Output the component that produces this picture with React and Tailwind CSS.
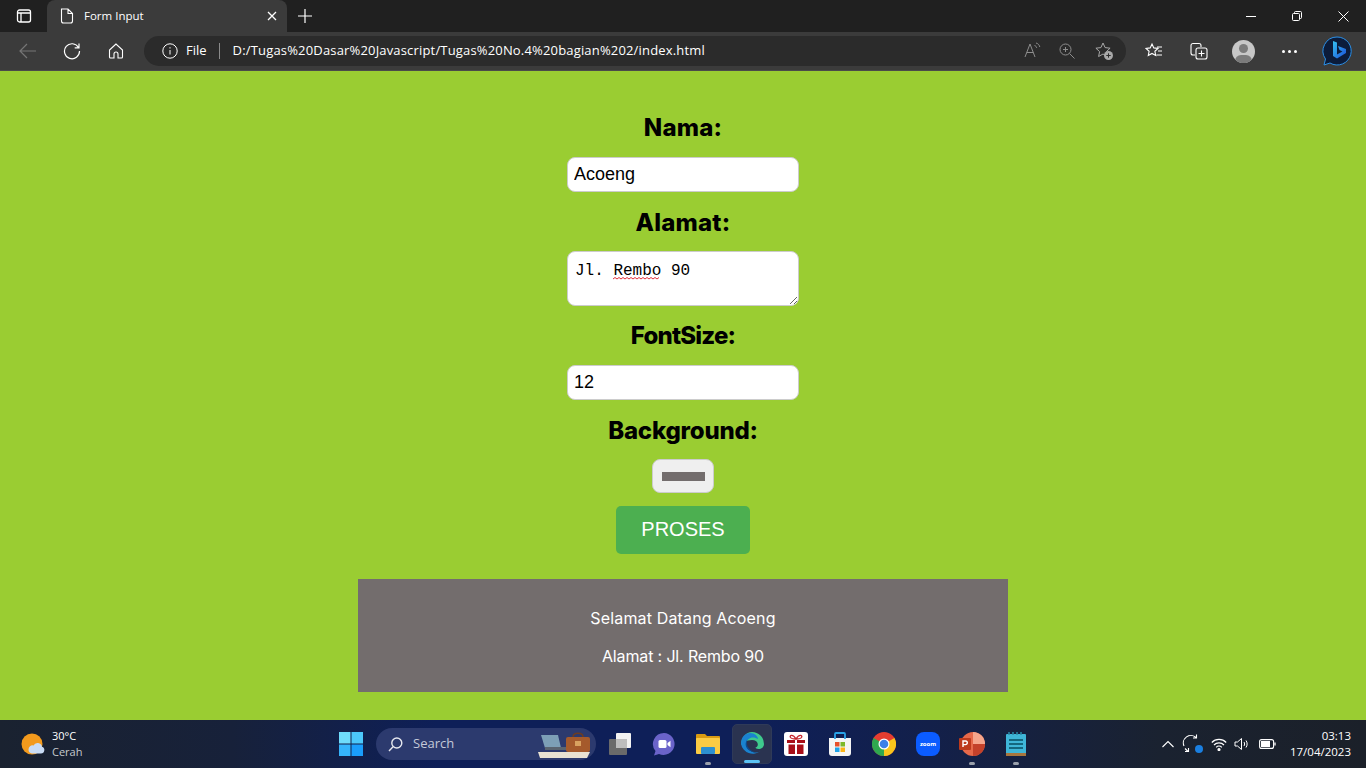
import React from "react";

const ui = { fontFamily: '"Open Sans","Noto Sans",sans-serif' };
const pop = { fontFamily: 'Inter,"Noto Sans",sans-serif' };

function TabBar() {
  return (
    <div className="h-[32px] bg-[#202020] flex items-end text-white">
      <div className="w-[47px] h-full flex items-center justify-center">
        <svg width="16" height="16" viewBox="0 0 16 16" fill="none" stroke="#fff" strokeWidth="1.3"><rect x="1.5" y="2" width="13" height="12" rx="2"/><path d="M1.5 5h13M5 5v9"/></svg>
      </div>
      <div className="w-[240px] h-full bg-[#3b3b3b] rounded-t-[8px] flex items-center pl-[12px] pr-[10px]">
        <svg width="16" height="16" viewBox="0 0 16 16" fill="none" stroke="#fff" strokeWidth="1.1"><path d="M2.500 1h6.500l4.500 4.500V13a2 2 0 0 1-2 2h-7a2 2 0 0 1-2-2zM9 1V5.500h4.500"/></svg>
        <span className="ml-[9px] text-[11.5px] flex-1" style={ui}>Form Input</span>
        <svg width="10" height="10" viewBox="0 0 10 10" stroke="#fff" strokeWidth="1.3"><path d="M1 1l8 8M9 1l-8 8"/></svg>
      </div>
      <div className="w-[36px] h-full flex items-center justify-center">
        <svg width="14" height="14" viewBox="0 0 14 14" stroke="#fff" strokeWidth="1.2"><path d="M7 0v14M0 7h14"/></svg>
      </div>
      <div className="flex-1" />
      <div className="w-[46px] h-full flex items-center justify-center">
        <svg width="10" height="10" viewBox="0 0 10 10" stroke="#fff"><path d="M0 5.5h10"/></svg>
      </div>
      <div className="w-[46px] h-full flex items-center justify-center">
        <svg width="10" height="10" viewBox="0 0 10 10" fill="none" stroke="#fff"><rect x=".5" y="2.5" width="7" height="7" rx="1"/><path d="M2.5 2.5V1.5a1 1 0 0 1 1-1h5a1 1 0 0 1 1 1v5a1 1 0 0 1-1 1h-1"/></svg>
      </div>
      <div className="w-[46px] h-full flex items-center justify-center">
        <svg width="11" height="11" viewBox="0 0 11 11" stroke="#fff"><path d="M.5.5l10 10M10.5.5l-10 10"/></svg>
      </div>
    </div>
  );
}

function Toolbar() {
  return (
    <div className="h-[39px] bg-[#3b3b3b] border-b border-[#4a4a4a] flex items-center text-white">
      <div className="w-[50px] shrink-0 pl-[19px] flex">
        <svg width="18" height="16" viewBox="0 0 18 16" fill="none" stroke="#767676" strokeWidth="1.2"><path d="M17 8H1M8 1L1 8l7 7"/></svg>
      </div>
      <div className="w-[44px] shrink-0 flex justify-center">
        <svg width="18" height="18" viewBox="0 0 18 18" fill="none" stroke="#fff" strokeWidth="1.2"><path d="M15.5 5.5A7.5 7.5 0 1 0 16.5 9M16 1.5v4.3h-4.3"/></svg>
      </div>
      <div className="w-[44px] shrink-0 flex justify-center">
        <svg width="16" height="16" viewBox="0 0 16 16" fill="none" stroke="#fff" strokeWidth="1.1"><path d="M8 1L1.5 7v7a1 1 0 0 0 1 1H6v-4a2 2 0 0 1 4 0v4h3.5a1 1 0 0 0 1-1V7z"/></svg>
      </div>
      <div className="w-[982px] shrink-0 h-[30px] ml-[6px] mt-[-1px] bg-[#2b2b2b] rounded-full flex items-center pl-[18px] pr-[12px]">
        <svg width="16" height="16" viewBox="0 0 16 16" fill="none" stroke="#fff" strokeWidth="1"><circle cx="8" cy="8" r="7.2"/><path d="M8 7v4.5M8 4.2v1.3"/></svg>
        <span className="ml-[8px] text-[13px]" style={ui}>File</span>
        <span className="ml-[12px] w-px h-[16px] bg-[#8a8a8a]" />
        <span className="ml-[13px] text-[13px] flex-1 tracking-[0.17px] whitespace-nowrap" style={ui}>D:/Tugas%20Dasar%20Javascript/Tugas%20No.4%20bagian%202/index.html</span>
        <svg className="mr-[18px]" width="17" height="17" viewBox="0 0 17 17" fill="none" stroke="#8d8d8d" strokeWidth="1"><path d="M1 15L6 2l5 13M2.8 10.5h6.4M10.5 3.5c1.2.3 2 1.200 2.200 2.400M12 1c2 .5 3.400 2 3.800 4"/></svg>
        <svg className="mr-[19px]" width="16" height="16" viewBox="0 0 16 16" fill="none" stroke="#8d8d8d" strokeWidth="1"><circle cx="6.5" cy="6.5" r="5.5"/><path d="M10.5 10.500l5 5M6.500 4v5M4 6.500h5"/></svg>
        <svg width="20" height="20" viewBox="0 0 20 20"><path d="M9 2l2.100 4.600 5 .6-3.700 3.400 1 4.900L9 13l-4.400 2.500 1-4.900L1.900 7.200l5-.6z" fill="none" stroke="#a8a8a8" strokeWidth="1"/><circle cx="14.500" cy="14.500" r="4.500" fill="#a8a8a8"/><path d="M14.500 12.300v4.400M12.300 14.500h4.400" stroke="#2b2b2b" strokeWidth="1"/></svg>
      </div>
      <div className="w-[19px] shrink-0" />
      <svg className="shrink-0" width="18" height="18" viewBox="0 0 18 18" fill="none" stroke="#fff" strokeWidth="1.1"><path d="M7 2l1.800 3.900 4.200.5-3.100 2.900.8 4.200L7 11.400l-3.700 2.100.8-4.200L1 6.400l4.200-.5zM12 5h5M13 9h4M11.500 13H17"/></svg>
      <div className="w-[27px] shrink-0" />
      <svg className="shrink-0" width="18" height="18" viewBox="0 0 18 18" fill="none" stroke="#fff" strokeWidth="1.1"><path d="M5 13H3a2 2 0 0 1-2-2V3.500a2 2 0 0 1 2-2h6a2 2 0 0 1 2 2V5"/><rect x="6" y="6" width="11" height="11" rx="2"/><path d="M11.500 8.500v6M8.500 11.500h6"/></svg>
      <div className="w-[24px] shrink-0" />
      <div className="relative shrink-0 w-[23px] h-[23px] rounded-full bg-[#c7c7c7] overflow-hidden">
        <div className="absolute left-[7px] top-[4px] w-[9px] h-[9px] rounded-full bg-[#7b7b7b]" />
        <div className="absolute left-[3px] top-[15px] w-[17px] h-[12px] rounded-full bg-[#7b7b7b]" />
      </div>
      <div className="w-[27px] shrink-0" />
      <div className="flex gap-[3px] shrink-0">
        <span className="w-[3px] h-[3px] rounded-full bg-white" />
        <span className="w-[3px] h-[3px] rounded-full bg-white" />
        <span className="w-[3px] h-[3px] rounded-full bg-white" />
      </div>
      <div className="w-[24px] shrink-0" />
      <svg className="shrink-0" width="32" height="32" viewBox="0 0 32 32" fill="none">
        <defs><linearGradient id="bing" x1="0" y1="0" x2="1" y2="1"><stop offset="0" stopColor="#35c1f1"/><stop offset="1" stopColor="#1b4fd8"/></linearGradient></defs>
        <path d="M16 2a14 14 0 1 1-7 26l-6 2 1.500-6A14 14 0 0 1 16 2z" fill="#0c1c3a" stroke="#2a8fe8" strokeWidth="1"/>
        <path d="M12 6l4 1.500v12l5.500-3-3-1.500-1.500-4 8 3v4l-9 5.500-4-2.500z" fill="url(#bing)"/>
      </svg>
    </div>
  );
}

function Label({ children, className }) {
  return <div className={"h-[36px] leading-[38px] text-[24px] font-extrabold text-black text-center " + className} style={pop}>{children}</div>;
}

function Form() {
  const inputCls = "block w-[232px] h-[35px] bg-white border border-[#cccccc] rounded-[8px] px-[6px] text-[18px] text-black outline-none";
  const sans = { fontFamily: '"Liberation Sans",Arial,sans-serif' };
  return (
    <div className="h-[649px] bg-[#9acd32] flex flex-col items-center pt-[38px]">
      <Label className="tracking-[0.2px]">Nama:</Label>
      <input className={inputCls + " mt-[12px]"} style={sans} defaultValue="Acoeng" />
      <Label className="mt-[12px] tracking-[0.2px]">Alamat:</Label>
      <div className="relative mt-[11px] w-[232px] h-[55px]">
        <textarea
          className="block w-[232px] h-[55px] bg-white border border-[#cccccc] rounded-[8px] px-[7px] pt-[10px] pb-[4px] text-[16px] leading-[18px] text-black outline-none"
          style={{ fontFamily: '"Liberation Mono",monospace' }}
          spellCheck={false}
          defaultValue="Jl. Rembo 90"
        />
        <svg className="absolute left-[46px] top-[26px]" width="48" height="3" viewBox="0 0 48 3" fill="none" stroke="#e0303a" strokeWidth="1">
          <path d="M0 2l2-1.500 2 1.500 2-1.500 2 1.500 2-1.500 2 1.500 2-1.500 2 1.500 2-1.500 2 1.500 2-1.500 2 1.500 2-1.500 2 1.500 2-1.500 2 1.500 2-1.500 2 1.500 2-1.500 2 1.500 2-1.500 2 1.500 2-1.500"/>
        </svg>
      </div>
      <Label className="mt-[11px] tracking-[-0.8px]">FontSize:</Label>
      <input className={inputCls + " mt-[12px]"} style={sans} defaultValue="12" />
      <Label className="mt-[12px] tracking-[-0.2px]">Background:</Label>
      <div className="mt-[11px] w-[62px] h-[34px] bg-[#efefef] border border-[#cccccc] rounded-[8px] flex items-center justify-center">
        <div className="w-[43px] h-[9px] bg-[#736d6d]" />
      </div>
      <div className="mt-[13px] w-[134px] h-[48px] pb-[2px] bg-[#4caf50] rounded-[5px] text-white text-[20px] flex items-center justify-center" style={sans}>PROSES</div>
      <div className="mt-[25px] w-[650px] h-[113px] pt-[4px] bg-[#736d6d] text-white text-[16px] text-center flex flex-col justify-center gap-[17px]" style={pop}>
        <div className="leading-[21px] tracking-[0.15px]">Selamat Datang Acoeng</div>
        <div className="leading-[21px] tracking-[-0.15px]">Alamat : Jl. Rembo 90</div>
      </div>
    </div>
  );
}

function TaskIcon({ children, active, dot }) {
  return (
    <div className="relative w-[44px] h-[44px] flex items-center justify-center">
      {active && <span className="absolute left-[2px] top-[2px] w-[40px] h-[40px] rounded-[5px] bg-[#2a3350] border border-[#2f3a58]" />}
      <span className="relative flex">{children}</span>
      {active && <span className="absolute bottom-[3px] left-[14px] w-[16px] h-[3px] rounded-full bg-[#5cc3f5]" />}
      {dot && <span className="absolute bottom-[1px] left-[19px] w-[6px] h-[3px] rounded-full bg-[#9aa0ab]" />}
    </div>
  );
}

function Taskbar() {
  return (
    <div className="h-[48px] flex items-center text-white bg-[linear-gradient(90deg,#1a2230_0%,#17213a_17%,#0e1f58_32%,#0e1f58_55%,#13204a_68%,#1a2230_85%,#1b2029_100%)]" style={ui}>
      <div className="w-[338px] pl-[21px] flex items-center">
        <svg width="24" height="24" viewBox="0 0 24 24"><circle cx="11" cy="12" r="10.500" fill="#f39a1d"/><path d="M11 21.500h9a3.500 3.500 0 0 0 1-6.800 4.500 4.500 0 0 0-8.500-1.200A4 4 0 0 0 7.500 17.500a4 4 0 0 0 3.500 4z" fill="#c9dcf5"/></svg>
        <div className="ml-[7px] text-[11px] leading-[16px]">
          <div>30°C</div>
          <div className="text-[#c6c9ce]">Cerah</div>
        </div>
      </div>
      <div className="w-[26px] flex justify-center">
        <svg width="24" height="24" viewBox="0 0 24 24">
          <rect x="0" y="0" width="11.500" height="11.500" fill="#6fdcfb"/><rect x="12.500" y="0" width="11.500" height="11.500" fill="#4cc8fa"/>
          <rect x="0" y="12.500" width="11.500" height="11.500" fill="#35b4fb"/><rect x="12.500" y="12.500" width="11.500" height="11.500" fill="#1a9dfb"/>
        </svg>
      </div>
      <div className="ml-[12px] relative w-[220px] h-[32px] rounded-full bg-[#2c3a6e] flex items-center pl-[12px]">
        <svg width="15" height="15" viewBox="0 0 15 15" fill="none" stroke="#e6e8ef" strokeWidth="1.400"><circle cx="8.800" cy="6" r="5"/><path d="M5 9.800L1 14"/></svg>
        <span className="ml-[10px] text-[13px] text-[#c4c9d8]">Search</span>
        <svg className="absolute left-[162px] top-[4px]" width="54" height="26" viewBox="0 0 54 26">
          <path d="M3 3h17l3 13H7z" fill="#7d9fb6"/><path d="M7 15h24v3H7z" fill="#5a6470"/>
          <rect x="28" y="5" width="24" height="15" rx="2" fill="#a55a2c"/><path d="M35 5c0-5 10-5 10 0" fill="none" stroke="#6f3c1f" strokeWidth="1.500"/><rect x="37" y="9" width="6" height="5" fill="#d9a260"/>
          <path d="M0 20h52l-3 6H2z" fill="#e9e2d2"/>
        </svg>
      </div>
      <div className="ml-[2px] flex">
        <TaskIcon>
          <svg width="24" height="24" viewBox="0 0 24 24"><rect x="8" y="1" width="15" height="15" rx="1" fill="#f2f2f2"/><rect x="1" y="7" width="18" height="16" rx="1" fill="#6a6a6a"/><rect x="8" y="7" width="11" height="9" fill="#bdbdbd"/></svg>
        </TaskIcon>
        <TaskIcon>
          <svg width="24" height="24" viewBox="0 0 24 24"><path d="M12 1a11 11 0 1 1-5 21l-5 1.500 1.500-4.500A11 11 0 0 1 12 1z" fill="#6a63c9"/><rect x="6.500" y="8" width="8" height="8" rx="1.500" fill="#fff"/><path d="M15.500 11l3-2.200v6.400l-3-2.200z" fill="#fff"/></svg>
        </TaskIcon>
        <TaskIcon dot>
          <svg width="24" height="22" viewBox="0 0 24 22"><path d="M0 2a1 1 0 0 1 1-1h8l2 2h12a1 1 0 0 1 1 1v2H0z" fill="#d99a12"/><rect x="0" y="5" width="24" height="16" rx="1" fill="#fbcb44"/><rect x="5" y="14" width="14" height="7" rx="1" fill="#2d8fd0"/></svg>
        </TaskIcon>
        <TaskIcon active>
          <svg width="24" height="24" viewBox="0 0 24 24"><path d="M12 0a12 12 0 0 1 12 12c0 3-2.500 5-5.500 5-2 0-3-.8-3-1.500 4-1 3-7.500-3.500-7.500C6 8 3 11 1 13 1 6 6 0 12 0z" fill="#3ec98d"/><path d="M1 12C1 5 5 1 10 1c5 0 8 3.500 8 6-3-2-7-2.500-10 .5-2.500 2.500-2.500 7 .5 10 1.500 1.500 4 3 7 3 2 0 4-.5 5-1.500A12 12 0 0 1 1 12z" fill="#1a82cf"/><path d="M8 17.500c-3-3-3-7.500-.5-10-2 3-.5 11 8.500 13-3 0-6-1.500-8-3z" fill="#0c4a8f"/></svg>
        </TaskIcon>
        <TaskIcon>
          <svg width="24" height="24" viewBox="0 0 24 24"><rect width="24" height="24" rx="3" fill="#fff"/><path d="M3 8h18v3H3zM4.500 12.500h15V22h-15z" fill="#a80f18"/><path d="M11 6h2v16h-2z" fill="#fff"/><path d="M12 7C9 2 5 3 6.500 5.500 7.500 7 10 7 12 7c2 0 4.500 0 5.500-1.500C19 3 15 2 12 7z" fill="none" stroke="#c5242c" strokeWidth="1.300"/></svg>
        </TaskIcon>
        <TaskIcon>
          <svg width="24" height="24" viewBox="0 0 24 24"><path d="M1 6h22v15a3 3 0 0 1-3 3H4a3 3 0 0 1-3-3z" fill="#f4f4f4"/><path d="M7 7V2a1 1 0 0 1 1-1h8a1 1 0 0 1 1 1v5" fill="none" stroke="#2aa4e8" strokeWidth="1.800"/><rect x="7" y="10" width="4.500" height="4.500" fill="#e8502a"/><rect x="12.500" y="10" width="4.500" height="4.500" fill="#7cb82a"/><rect x="7" y="15.500" width="4.500" height="4.500" fill="#1ea2e8"/><rect x="12.500" y="15.500" width="4.500" height="4.500" fill="#fbb417"/></svg>
        </TaskIcon>
        <TaskIcon>
          <svg width="24" height="24" viewBox="0 0 24 24"><circle cx="12" cy="12" r="12" fill="#e53d30"/><path d="M12 12L22.400 6A12 12 0 0 1 12 24z" fill="#f9c51c"/><path d="M12 12L12 24A12 12 0 0 1 1.600 6z" fill="#2fa84f"/><circle cx="12" cy="12" r="5.500" fill="#fff"/><circle cx="12" cy="12" r="4.300" fill="#3c7fe8"/></svg>
        </TaskIcon>
        <TaskIcon>
          <div className="w-[24px] h-[24px] rounded-[8px] bg-[#0b5cff] flex items-center justify-center text-[6px] font-bold leading-none">zoom</div>
        </TaskIcon>
        <TaskIcon dot>
          <svg width="26" height="24" viewBox="0 0 26 24"><circle cx="14" cy="12" r="12" fill="#e6694a"/><path d="M14 0a12 12 0 0 1 12 12H14z" fill="#f5a58b"/><path d="M14 12h12a12 12 0 0 1-12 12z" fill="#c4412a"/><rect x="0" y="6" width="12" height="12" rx="1" fill="#bd3a1c"/><path d="M4 15V9h2.500a1.800 1.800 0 0 1 0 3.600H4" fill="none" stroke="#fff" strokeWidth="1.400"/></svg>
        </TaskIcon>
        <TaskIcon dot>
          <svg width="20" height="24" viewBox="0 0 20 24"><rect x="0" y="2" width="20" height="22" rx="1" fill="#3fb6d8"/><path d="M0 21h20v3H0z" fill="#a8763e"/><path d="M3 8h14M3 12h14M3 16h14" stroke="#14677f" strokeWidth="2"/><path d="M3 0v3M7 0v3M11 0v3M15 0v3" stroke="#2a8ba8" strokeWidth="1.500"/></svg>
        </TaskIcon>
      </div>
      <div className="flex-1" />
      <div className="flex items-center">
        <svg width="12" height="8" viewBox="0 0 12 8" fill="none" stroke="#fff" strokeWidth="1.100"><path d="M.5 7L6 1.500 11.500 7"/></svg>
        <div className="relative ml-[8px] w-[20px] h-[20px]">
          <svg width="20" height="20" viewBox="0 0 20 20" fill="none" stroke="#fff" strokeWidth="1.100"><path d="M2 12a7.500 7.500 0 0 1 12-8.500M14.500 .5v3.500H11M3 14.500l3 3M3 17.500h3.500v-3.500"/></svg>
          <span className="absolute right-[-1px] bottom-[1px] w-[8px] h-[8px] rounded-full bg-[#1a7fe0]" />
        </div>
        <svg className="ml-[9px]" width="16" height="13" viewBox="0 0 16 13" fill="none" stroke="#fff" strokeWidth="1.200"><path d="M.8 4.500a10 10 0 0 1 14.400 0M3 7a7 7 0 0 1 10 0M5.200 9.300a3.700 3.700 0 0 1 5.600 0"/><circle cx="8" cy="11.500" r="1" fill="#fff"/></svg>
        <svg className="ml-[7px]" width="16" height="14" viewBox="0 0 16 14" fill="none" stroke="#fff" strokeWidth="1"><path d="M1 5h2.500L7.500 1.500v11L3.500 9H1zM10 5c.8 1.200.8 2.800 0 4M12 3.500c1.500 2 1.500 5 0 7"/></svg>
        <svg className="ml-[9px]" width="17" height="10" viewBox="0 0 17 10" fill="none"><rect x=".6" y=".6" width="14" height="8.800" rx="2" stroke="#fff" strokeWidth="1.100"/><rect x="2" y="2" width="9" height="6" fill="#fff"/><path d="M16 3.500v3" stroke="#fff" strokeWidth="1.300"/></svg>
      </div>
      <div className="w-[75px] mr-[15px] text-right text-[11.5px] leading-[16px] whitespace-nowrap">
        <div>03:13</div>
        <div>17/04/2023</div>
      </div>
    </div>
  );
}

export default function App() {
  return (
    <div className="w-[1366px] h-[768px] overflow-hidden">
      <TabBar />
      <Toolbar />
      <Form />
      <Taskbar />
    </div>
  );
}
